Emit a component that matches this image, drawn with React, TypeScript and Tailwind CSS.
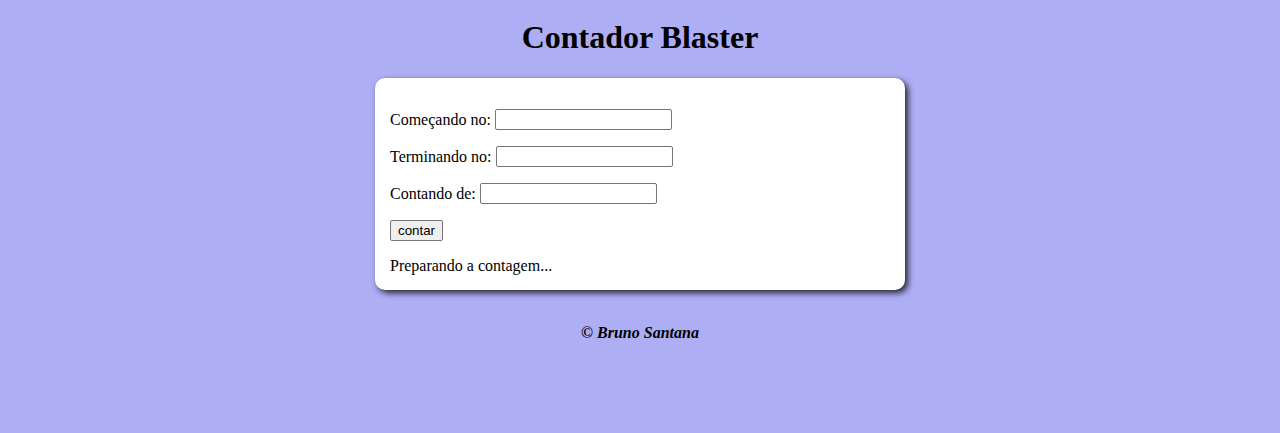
import React, { useState } from "react";

const serif = "font-['Liberation_Serif','Times_New_Roman',serif]";

const Field = ({ label }: { label: string }) => (
  <p className="m-0 mb-4 h-[21px] flex items-center gap-[4px]">
    <span>{label}</span>
    <input
      type="number"
      className="w-[177px] h-[21px] border border-[#767676] rounded-[2px] bg-white px-[2px] text-[13.33px] font-['Liberation_Sans',Arial,sans-serif] outline-none"
    />
  </p>
);

const App = () => {
  const [res] = useState("Preparando a contagem...");

  return (
    <div className={`min-h-[433px] bg-[#aeaef5] text-black ${serif} text-base`}>
      <header className="pt-[19px]">
        <h1 className="m-0 h-[37px] leading-[37px] text-center text-[32px] font-bold">
          Contador Blaster
        </h1>
      </header>
      <section className="w-[530px] mx-auto mt-[22px] bg-white rounded-[10px] px-[15px] pt-[15px] pb-[15px] shadow-[3px_3px_6px_rgba(0,0,0,0.8)]">
        <div className="pt-4">
          <Field label="Começando no:" />
          <Field label="Terminando no:" />
          <Field label="Contando de:" />
          <p className="m-0 mb-4 h-[21px]">
            <button className="h-[21px] w-[53px] bg-[#efefef] border border-[#767676] rounded-[2px] text-[13.33px] leading-none font-['Liberation_Sans',Arial,sans-serif] align-top">
              contar
            </button>
          </p>
          <div className="leading-[18px] h-[18px]">{res}</div>
        </div>
      </section>
      <footer className="mt-[34px]">
        <p className="m-0 text-center font-bold italic leading-[18px]">
          © Bruno Santana
        </p>
      </footer>
    </div>
  );
};

export default App;
